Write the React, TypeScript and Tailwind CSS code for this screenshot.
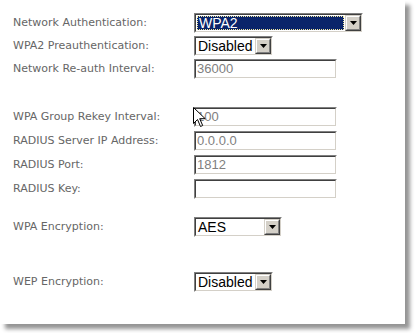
import React from 'react';

const labelFont = { fontFamily: '"DejaVu Sans", Verdana, sans-serif' };

const Sunken: React.FC<{ className?: string; children?: React.ReactNode }> = ({ className = '', children }) => (
  <div className={`border border-t-[#808080] border-l-[#808080] border-r-white border-b-white ${className}`}>
    <div className="border border-t-[#404040] border-l-[#404040] border-r-[#d4d0c8] border-b-[#d4d0c8] h-full flex bg-white">
      {children}
    </div>
  </div>
);

const DropButton = () => (
  <div className="w-4 h-4 bg-[#d4d0c8] border border-t-[#d4d0c8] border-l-[#d4d0c8] border-r-[#404040] border-b-[#404040] shrink-0">
    <div className="w-full h-full border border-t-white border-l-white border-r-[#808080] border-b-[#808080] flex items-center justify-center">
      <svg width="7" height="4" viewBox="0 0 7 4">
        <path d="M0 0h7L3.5 4z" fill="#000" />
      </svg>
    </div>
  </div>
);

const Select: React.FC<{ value: string; w: string; focused?: boolean }> = ({ value, w, focused }) => (
  <Sunken className={`${w} h-5`}>
    <div className="flex-1 flex items-center min-w-0">
      {focused ? (
        <div className="flex-1 h-[14px] mx-px bg-[#0a246a] border border-dotted border-[#f4eba0] flex items-center text-white text-[14px] leading-none pl-px">
          {value}
        </div>
      ) : (
        <span className="text-[14px] leading-none text-black pl-[2px]">{value}</span>
      )}
    </div>
    <DropButton />
  </Sunken>
);

const TextBox: React.FC<{ value: string }> = ({ value }) => (
  <Sunken className="w-[143px] h-5">
    <span className="text-[13px] leading-4 text-[#808080] pl-px">{value}</span>
  </Sunken>
);

type Row = { label: string; control: React.ReactNode; mt: string };

const rows: Row[] = [
  { label: 'Network Authentication:', control: <Select value="WPA2" w="w-[169px]" focused />, mt: 'mt-0' },
  { label: 'WPA2 Preauthentication:', control: <Select value="Disabled" w="w-[79px]" />, mt: 'mt-[3px]' },
  { label: 'Network Re-auth Interval:', control: <TextBox value="36000" />, mt: 'mt-[3px]' },
  { label: 'WPA Group Rekey Interval:', control: <TextBox value="100" />, mt: 'mt-[28px]' },
  { label: 'RADIUS Server IP Address:', control: <TextBox value="0.0.0.0" />, mt: 'mt-1' },
  { label: 'RADIUS Port:', control: <TextBox value="1812" />, mt: 'mt-1' },
  { label: 'RADIUS Key:', control: <TextBox value="" />, mt: 'mt-1' },
  { label: 'WPA Encryption:', control: <Select value="AES" w="w-[88px]" />, mt: 'mt-[18px]' },
  { label: 'WEP Encryption:', control: <Select value="Disabled" w="w-[79px]" />, mt: 'mt-[35px]' },
];

export default function App() {
  return (
    <div className="w-[415px] h-[333px] bg-white relative overflow-hidden" style={{ fontFamily: '"Liberation Sans", Arial, sans-serif' }}>
      <div className="w-[405px] h-[324px] bg-white shadow-[5px_5px_4px_rgba(0,0,0,0.42)] pt-[13px] flex flex-col">
        {rows.map((r) => (
          <div key={r.label} className={`flex items-center h-5 ${r.mt}`}>
            <div className="w-[194px] shrink-0 pl-[13px] text-[11px] text-[#666] whitespace-nowrap" style={labelFont}>
              {r.label}
            </div>
            {r.control}
          </div>
        ))}
      </div>

      {/* mouse pointer */}
      <svg className="absolute left-[193px] top-[107px]" width="13" height="21" viewBox="0 0 13 21">
        <path d="M0.5 0.5v16l4-4 3 7 2.2-1-3-6.8h5.5z" fill="#fff" stroke="#000" strokeWidth="1" />
      </svg>
    </div>
  );
}
